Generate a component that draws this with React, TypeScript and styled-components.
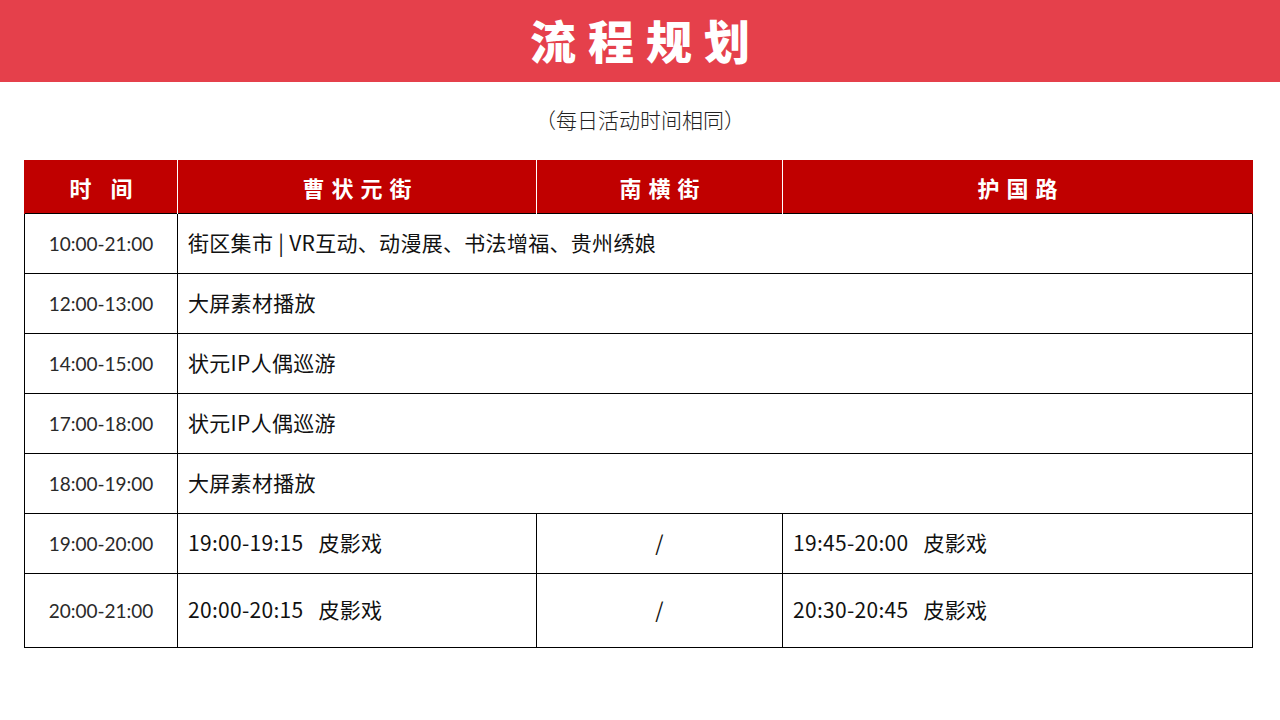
import React from "react";
import styled, { createGlobalStyle } from "styled-components";

const GlobalStyle = createGlobalStyle`
  html, body { margin: 0; padding: 0; background: #ffffff; }
  body { font-family: "Noto Sans CJK SC", "Noto Sans", sans-serif; }
`;

const Page = styled.div`
  width: 1280px;
  height: 720px;
  background: #ffffff;
  display: flex;
  flex-direction: column;
  overflow: hidden;
`;

const Banner = styled.header`
  height: 82px;
  background: #e5404b;
  display: flex;
  align-items: center;
  justify-content: center;
`;

const Title = styled.h1`
  margin: 0;
  color: #ffffff;
  font-family: "Noto Sans CJK SC", sans-serif;
  font-weight: 900;
  font-size: 46px;
  letter-spacing: 12px;
  padding-left: 12px;
  line-height: 1;
  transform: translateY(-2px);
`;

const Subtitle = styled.p`
  margin: 23px 0 0;
  height: 28px;
  line-height: 28px;
  text-align: center;
  font-size: 21px;
  font-weight: 300;
  color: #222222;
`;

const Table = styled.table`
  margin: 27px 0 0 24px;
  width: 1228px;
  border-collapse: collapse;
  table-layout: fixed;
`;

const HeadCell = styled.th`
  height: 53px;
  padding: 0;
  background: #c00000;
  color: #ffffff;
  font-family: "Noto Sans CJK SC", sans-serif;
  font-weight: 700;
  font-size: 22px;
  letter-spacing: 7px;
  text-indent: 7px;
  text-align: center;
  border-left: 1px solid #ffffff;
  &:first-child { border-left: 1px solid #c00000; }
  &:last-child { border-right: 1px solid #c00000; }
`;

const Row = styled.tr<{ $tall?: boolean }>`
  height: ${(p) => (p.$tall ? 74 : 60)}px;
`;

const TimeCell = styled.td`
  border: 1px solid #000000;
  padding: 0;
  text-align: center;
  font-family: Lato, "Liberation Sans", sans-serif;
  font-size: 19px;
  color: #2a2a2a;
`;

const TextCell = styled.td<{ $center?: boolean }>`
  border: 1px solid #000000;
  padding: 0 0 3px ${(p) => (p.$center ? 0 : 10)}px;
  text-align: ${(p) => (p.$center ? "center" : "left")};
  font-size: 21px;
  letter-spacing: 0.3px;
  color: #111111;
  white-space: pre;
`;

type Item = { time: string; cells: string[] };

const rows: Item[] = [
  { time: "10:00-21:00", cells: ["街区集市 | VR互动、动漫展、书法增福、贵州绣娘"] },
  { time: "12:00-13:00", cells: ["大屏素材播放"] },
  { time: "14:00-15:00", cells: ["状元IP人偶巡游"] },
  { time: "17:00-18:00", cells: ["状元IP人偶巡游"] },
  { time: "18:00-19:00", cells: ["大屏素材播放"] },
  { time: "19:00-20:00", cells: ["19:00-19:15   皮影戏", "/", "19:45-20:00   皮影戏"] },
  { time: "20:00-21:00", cells: ["20:00-20:15   皮影戏", "/", "20:30-20:45   皮影戏"] },
];

export default function App() {
  return (
    <Page>
      <GlobalStyle />
      <Banner>
        <Title>流程规划</Title>
      </Banner>
      <Subtitle>（每日活动时间相同）</Subtitle>
      <Table>
        <colgroup>
          <col style={{ width: 153 }} />
          <col style={{ width: 359 }} />
          <col style={{ width: 246 }} />
          <col style={{ width: 470 }} />
        </colgroup>
        <thead>
          <tr>
            <HeadCell>时 间</HeadCell>
            <HeadCell>曹状元街</HeadCell>
            <HeadCell>南横街</HeadCell>
            <HeadCell>护国路</HeadCell>
          </tr>
        </thead>
        <tbody>
          {rows.map((r, i) => (
            <Row key={r.time + i} $tall={i === rows.length - 1}>
              <TimeCell>{r.time}</TimeCell>
              {r.cells.length === 1 ? (
                <TextCell colSpan={3}>{r.cells[0]}</TextCell>
              ) : (
                r.cells.map((c, j) => (
                  <TextCell key={j} $center={c === "/"}>
                    {c}
                  </TextCell>
                ))
              )}
            </Row>
          ))}
        </tbody>
      </Table>
    </Page>
  );
}
